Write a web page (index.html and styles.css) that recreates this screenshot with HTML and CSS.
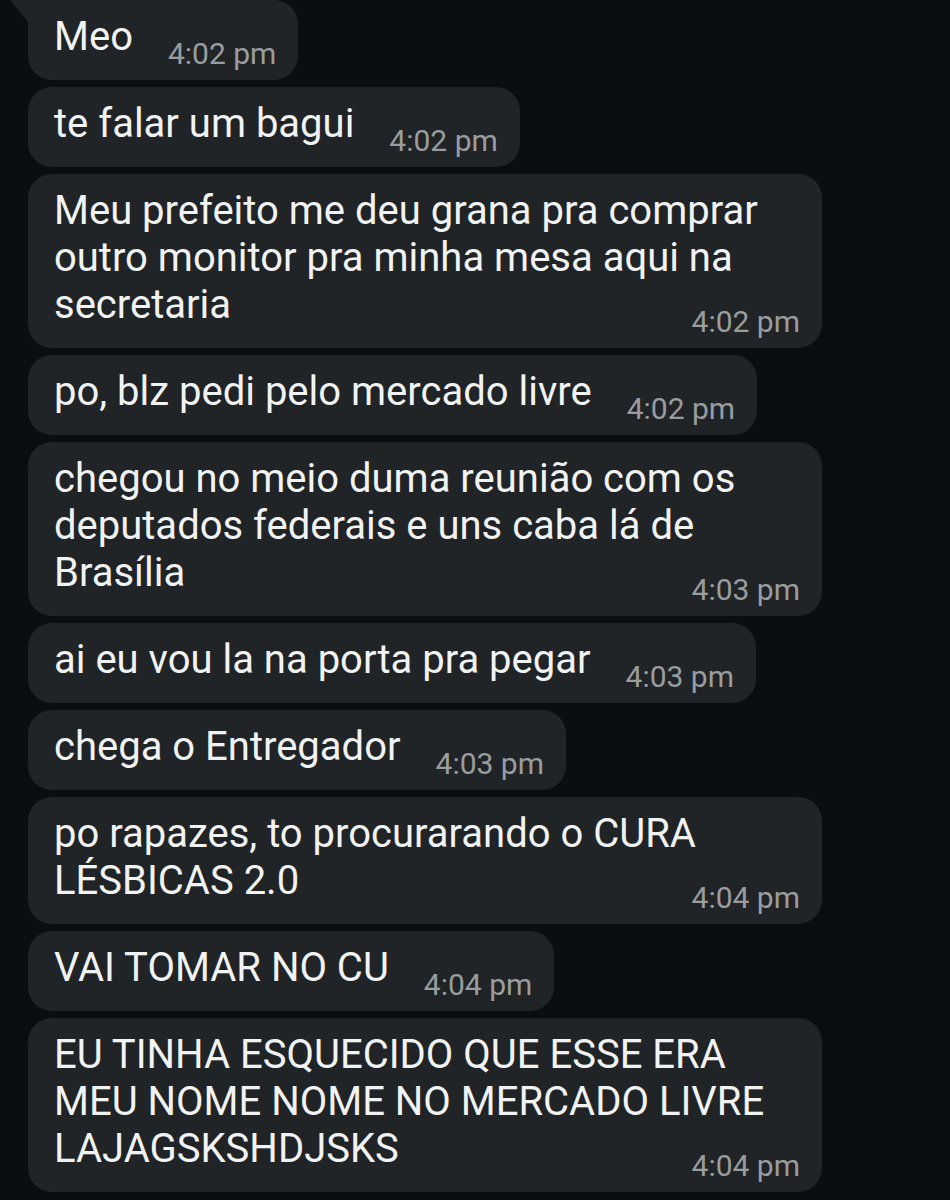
FILE: index.html
```html
<!DOCTYPE html>
<html lang="pt-BR">
<head>
  <meta charset="UTF-8" />
  <title>Conversa</title>
  <meta name="viewport" content="width=device-width, initial-scale=1.0" />
  <link rel="stylesheet" href="styles.css">
</head>
<body>

<div class="chat">
  <div class="msg first"><span class="texto">Meo</span><span class="hora">4:02 pm</span></div>
  <div class="msg"><span class="texto">te falar um bagui</span><span class="hora">4:02 pm</span></div>
  <div class="msg longa"><span class="texto">Meu prefeito me deu grana pra comprar outro monitor pra minha mesa aqui na secretaria</span><span class="hora">4:02 pm</span></div>
  <div class="msg"><span class="texto">po, blz pedi pelo mercado livre</span><span class="hora">4:02 pm</span></div>
  <div class="msg longa"><span class="texto">chegou no meio duma reunião com os deputados federais e uns caba lá de Brasília</span><span class="hora">4:03 pm</span></div>
  <div class="msg"><span class="texto">ai eu vou la na porta pra pegar</span><span class="hora">4:03 pm</span></div>
  <div class="msg"><span class="texto">chega o Entregador</span><span class="hora">4:03 pm</span></div>
  <div class="msg longa"><span class="texto">po rapazes, to procurarando o CURA LÉSBICAS 2.0</span><span class="hora">4:04 pm</span></div>
  <div class="msg"><span class="texto">VAI TOMAR NO CU</span><span class="hora">4:04 pm</span></div>
  <div class="msg longa"><span class="texto">EU TINHA ESQUECIDO QUE ESSE ERA MEU NOME NOME NO MERCADO LIVRE LAJAGSKSHDJSKS</span><span class="hora">4:04 pm</span></div>
</div>

</body>
</html>
```

FILE: styles.css
```css
body {
  margin: 0;
  font-family: Roboto, 'Noto Sans', sans-serif;
  background-color: #0b0e11;
  color: #f1f2f2;
}

.chat {
  display: flex;
  flex-direction: column;
  align-items: flex-start;
  gap: 7px;
  padding: 0 0 0 28px;
}

.msg {
  position: relative;
  box-sizing: border-box;
  max-width: 794px;
  padding: 13px 22px 11px 26px;
  background-color: #202427;
  border-radius: 24px;
  font-size: 40px;
  line-height: 47px;
}

.msg.first {
  border-top-left-radius: 0;
}

/* rabinho da primeira mensagem */
.msg.first::before {
  content: "";
  position: absolute;
  top: 0;
  left: -18px;
  border-top: 22px solid #202427;
  border-left: 18px solid transparent;
}

.msg .hora {
  display: inline-block;
  margin-left: 35px;
  font-size: 30px;
  line-height: 30px;
  vertical-align: -14px;
  color: #9a9d9f;
}

.msg.longa .hora {
  display: block;
  margin: -21px 0 0;
  text-align: right;
}
```
